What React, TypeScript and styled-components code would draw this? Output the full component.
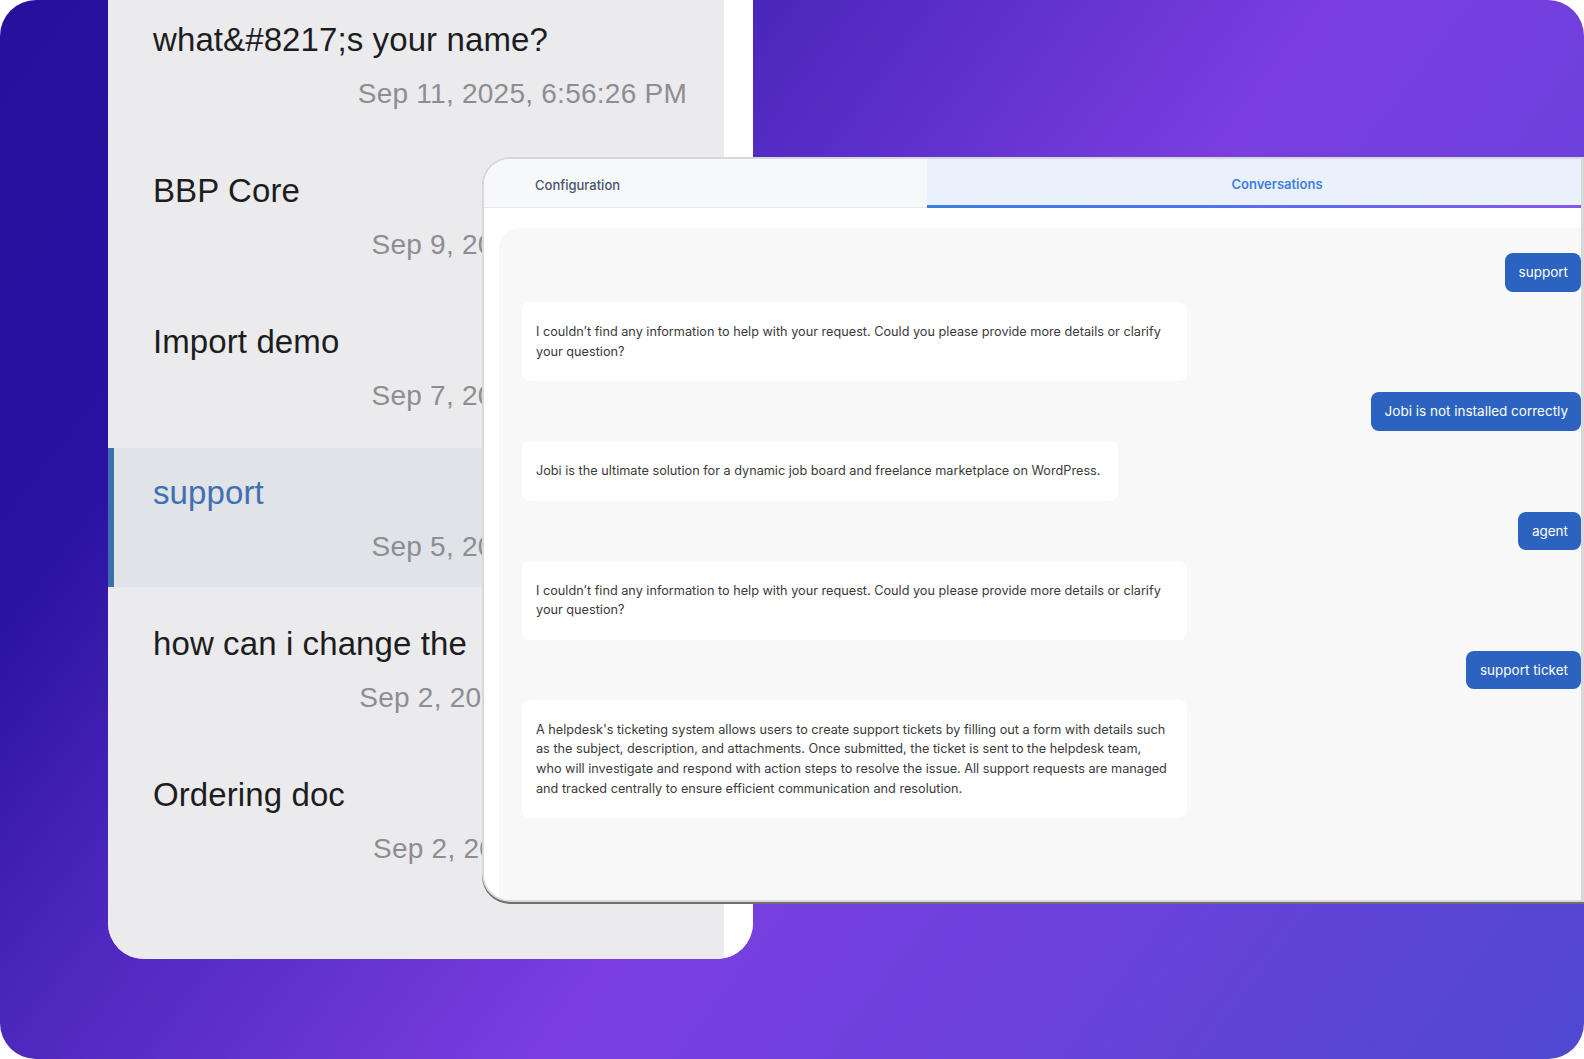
import React from "react";
import styled, { createGlobalStyle } from "styled-components";

const GlobalStyle = createGlobalStyle`
  html, body { margin: 0; padding: 0; background: #ffffff; }
  body { width: 1584px; height: 1059px; overflow: hidden; }
  * { box-sizing: border-box; }
`;

const Frame = styled.div`
  position: relative;
  width: 1584px;
  height: 1059px;
  border-radius: 36px;
  overflow: hidden;
  background: linear-gradient(
    127deg,
    #27109c 0%,
    #2b13a2 20%,
    #4a26bc 32%,
    #7a3ee0 56%,
    #6c41dc 74%,
    #4f48d0 100%
  );
  display: flex;
  align-items: flex-start;
  padding-left: 108px;
`;

const HistoryPanel = styled.div`
  width: 645px;
  height: 959px;
  display: flex;
  background: #ffffff;
  border-radius: 0 0 36px 36px;
  overflow: hidden;
`;

const HistoryList = styled.div`
  width: 616px;
  height: 100%;
  background: #ebebed;
  overflow: hidden;
  display: flex;
  flex-direction: column;
  & > :first-child { margin-top: -5px; }
`;

const Gutter = styled.div`
  flex: 1;
  background: #ffffff;
`;

const HistoryRow = styled.div<{ $active?: boolean }>`
  flex: none;
  height: 139px;
  margin-bottom: 12px;
  border-left: 6px solid ${(p) => (p.$active ? "#3d6ead" : "transparent")};
  background: ${(p) => (p.$active ? "#e0e3e8" : "transparent")};
  padding: 25px 37px 22px 39px;
  display: flex;
  flex-direction: column;
  font-family: "Liberation Sans", Arial, sans-serif;
`;

const RowTitle = styled.div<{ $active?: boolean }>`
  font-size: 33px;
  line-height: 40px;
  letter-spacing: 0.1px;
  color: ${(p) => (p.$active ? "#3f71b2" : "#1d1d1f")};
  white-space: nowrap;
`;

const RowDate = styled.div`
  margin-top: 17px;
  font-size: 28px;
  line-height: 34px;
  letter-spacing: 0.25px;
  color: #8d8d92;
  text-align: right;
  white-space: nowrap;
`;

const ChatCard = styled.div`
  position: absolute;
  left: 482px;
  top: 157px;
  width: 1102px;
  height: 745px;
  background: #ffffff;
  border: 2px solid #d8d8d8;
  border-right-width: 3px;
  border-radius: 28px 0 0 28px;
  box-shadow: 0 2px 0 #6f6f6f;
  overflow: hidden;
  display: flex;
  flex-direction: column;
  font-family: Inter, "Noto Sans", sans-serif;
`;

const TabBar = styled.div`
  display: flex;
  height: 49px;
  flex: none;
`;

const Tab = styled.div<{ $active?: boolean }>`
  display: flex;
  align-items: center;
  font-size: 13px;
  font-weight: 500;
  ${(p) =>
    p.$active
      ? `
    flex: 1;
    justify-content: center;
    padding-left: 46px;
    padding-top: 3px;
    background: #e9f1fc;
    color: #3f7de2;
    font-weight: 600;
    border-bottom: 3px solid;
    border-image: linear-gradient(90deg, #3b7fe8 0%, #5b6ef0 55%, #8a55ec 100%) 1;
  `
      : `
    width: 443px;
    flex: none;
    padding-left: 51px;
    padding-top: 3px;
    background: #f6f8fa;
    color: #4a5568;
    border-bottom: 1px solid #e3e6ea;
  `}
`;

const Body = styled.div`
  flex: 1;
  display: flex;
  padding: 20px 0 0 15px;
  background: #ffffff;
`;

const ChatPanel = styled.div`
  flex: 1;
  background: #f8f8f8;
  border-top-left-radius: 20px;
  padding: 25px 0 0 23px;
  display: flex;
  flex-direction: column;
  gap: 10.7px;
`;

const UserBubble = styled.div`
  align-self: flex-end;
  background: #2c63c1;
  color: #ffffff;
  font-size: 13.5px;
  line-height: 18.5px;
  padding: 10px 13px 10px 14px;
  border-radius: 8px;
  white-space: nowrap;
`;

const BotBubble = styled.div`
  align-self: flex-start;
  max-width: 664.5px;
  background: #ffffff;
  color: #3a3a3a;
  font-size: 12.7px;
  line-height: 19.6px;
  padding: 20px 18px 20px 14px;
  border-radius: 8px;
`;

type Conv = { title: string; date: string; active?: boolean };

const conversations: Conv[] = [
  { title: "what&#8217;s your name?", date: "Sep 11, 2025, 6:56:26 PM" },
  { title: "BBP Core", date: "Sep 9, 2025, 4:18:32 PM" },
  { title: "Import demo", date: "Sep 7, 2025, 2:47:15 PM" },
  { title: "support", date: "Sep 5, 2025, 3:29:41 PM", active: true },
  { title: "how can i change the", date: "Sep 2, 2025, 11:24:09 AM" },
  { title: "Ordering doc", date: "Sep 2, 2025, 9:35:52 AM" },
];

type Msg = { from: "user" | "bot"; text: string };

const messages: Msg[] = [
  { from: "user", text: "support" },
  {
    from: "bot",
    text: "I couldn’t find any information to help with your request. Could you please provide more details or clarify your question?",
  },
  { from: "user", text: "Jobi is not installed correctly" },
  {
    from: "bot",
    text: "Jobi is the ultimate solution for a dynamic job board and freelance marketplace on WordPress.",
  },
  { from: "user", text: "agent" },
  {
    from: "bot",
    text: "I couldn’t find any information to help with your request. Could you please provide more details or clarify your question?",
  },
  { from: "user", text: "support ticket" },
  {
    from: "bot",
    text: "A helpdesk's ticketing system allows users to create support tickets by filling out a form with details such as the subject, description, and attachments. Once submitted, the ticket is sent to the helpdesk team, who will investigate and respond with action steps to resolve the issue. All support requests are managed and tracked centrally to ensure efficient communication and resolution.",
  },
];

export default function App() {
  return (
    <>
      <GlobalStyle />
      <Frame>
        <HistoryPanel>
          <HistoryList>
            {conversations.map((c, i) => (
              <HistoryRow key={i} $active={c.active}>
                <RowTitle $active={c.active}>{c.title}</RowTitle>
                <RowDate>{c.date}</RowDate>
              </HistoryRow>
            ))}
          </HistoryList>
          <Gutter />
        </HistoryPanel>
        <ChatCard>
          <TabBar>
            <Tab>Configuration</Tab>
            <Tab $active>Conversations</Tab>
          </TabBar>
          <Body>
            <ChatPanel>
              {messages.map((m, i) =>
                m.from === "user" ? (
                  <UserBubble key={i}>{m.text}</UserBubble>
                ) : (
                  <BotBubble key={i}>{m.text}</BotBubble>
                )
              )}
            </ChatPanel>
          </Body>
        </ChatCard>
      </Frame>
    </>
  );
}
